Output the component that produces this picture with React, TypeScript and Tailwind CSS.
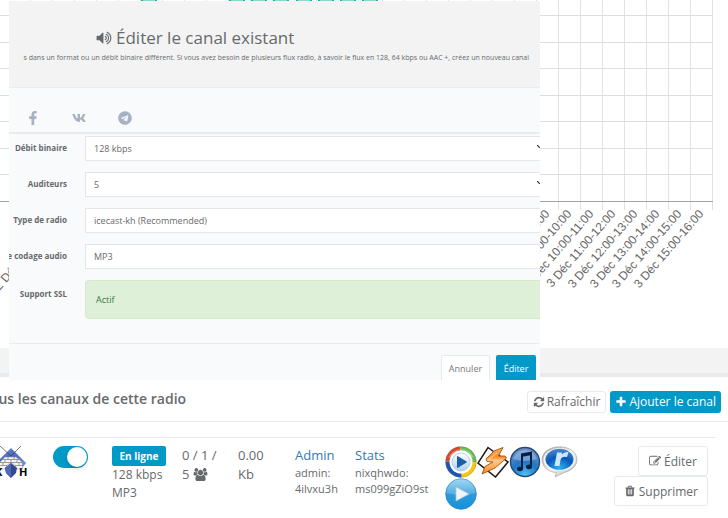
import type { ReactNode } from 'react';
import { FaFacebookF, FaTelegram, FaVk } from 'react-icons/fa';

// ─── Glyphs ───────────────────────────────────────────────────────────────────

const GLYPHS = {
  volume:
    'M832 352v1088q0 26-19 45t-45 19-45-19l-333-333h-262q-26 0-45-19t-19-45v-384q0-26 19-45t45-19h262l333-333q19-19 45-19t45 19 19 45zm384 544q0 76-42.5 141.5t-112.5 93.5q-10 5-25 5-26 0-45-18.5t-19-45.5q0-21 12-35.5t29-25 34-23 29-36 12-56.5-12-56.5-29-36-34-23-29-25-12-35.5q0-27 19-45.5t45-18.5q15 0 25 5 70 27 112.5 93t42.5 142zm256 0q0 153-85 282.5t-225 188.5q-13 5-25 5-27 0-46-19t-19-45q0-39 39-59 56-29 76-44 74-54 115.5-135.5t41.5-173.5-41.5-173.5-115.5-135.5q-20-15-76-44-39-20-39-59 0-26 19-45t45-19q13 0 26 5 140 59 225 188.5t85 282.5zm256 0q0 230-127 422.5t-338 283.5q-13 5-26 5-26 0-45-19t-19-45q0-36 39-59 7-4 22.5-10.5t22.5-10.5q46-25 82-51 123-91 192-227t69-289-69-289-192-227q-36-26-82-51-7-4-22.5-10.5t-22.5-10.5q-39-23-39-59 0-26 19-45t45-19q13 0 26 5 211 91 338 283.5t127 422.5z',
  refresh:
    'M1639 1056q0 5-1 7-64 268-268 434.5t-478 166.5q-146 0-282.5-55t-243.5-157l-129 129q-19 19-45 19t-45-19-19-45v-448q0-26 19-45t45-19h448q26 0 45 19t19 45-19 45l-137 137q71 66 161 102t187 36q134 0 250-65t186-179q11-17 53-117 8-23 30-23h192q13 0 22.5 9.5t9.5 22.5zm25-800v448q0 26-19 45t-45 19h-448q-26 0-45-19t-19-45 19-45l138-138q-148-137-349-137-134 0-250 65t-186 179q-11 17-53 117-8 23-30 23h-199q-13 0-22.5-9.5t-9.5-22.5v-7q65-268 270-434.5t480-166.5q146 0 284 55.5t245 156.5l130-129q19-19 45-19t45 19 19 45z',
  plus:
    'M1600 736v192q0 40-28 68t-68 28h-416v416q0 40-28 68t-68 28h-192q-40 0-68-28t-28-68v-416h-416q-40 0-68-28t-28-68v-192q0-40 28-68t68-28h416v-416q0-40 28-68t68-28h192q40 0 68 28t28 68v416h416q40 0 68 28t28 68z',
  edit:
    'M888 1184l116-116-152-152-116 116v56h96v96h56zm440-720q-16-16-33 1l-350 350q-17 17-1 33t33-1l350-350q17-17 1-33zm80 594v190q0 119-84.5 203.5t-203.5 84.5h-832q-119 0-203.5-84.5t-84.5-203.5v-832q0-119 84.5-203.5t203.5-84.5h832q63 0 117 25 15 7 18 23 3 17-9 29l-49 49q-14 14-32 8-23-6-45-6h-832q-66 0-113 47t-47 113v832q0 66 47 113t113 47h832q66 0 113-47t47-113v-126q0-13 9-22l64-64q15-15 35-7t20 29zm-96-738l288 288-672 672h-288v-288zm444 132l-92 92-288-288 92-92q28-28 68-28t68 28l152 152q28 28 28 68t-28 68z',
  trash:
    'M704 1376v-704q0-14-9-23t-23-9h-64q-14 0-23 9t-9 23v704q0 14 9 23t23 9h64q14 0 23-9t9-23zm256 0v-704q0-14-9-23t-23-9h-64q-14 0-23 9t-9 23v704q0 14 9 23t23 9h64q14 0 23-9t9-23zm256 0v-704q0-14-9-23t-23-9h-64q-14 0-23 9t-9 23v704q0 14 9 23t23 9h64q14 0 23-9t9-23zm-544-992h448l-48-117q-7-9-17-11h-317q-10 2-17 11zm928 32v64q0 14-9 23t-23 9h-96v948q0 83-47 143.5t-113 60.5h-832q-66 0-113-58.5t-47-141.5v-952h-96q-14 0-23-9t-9-23v-64q0-14 9-23t23-9h309l70-167q15-37 54-63t79-26h320q40 0 79 26t54 63l70 167h309q14 0 23 9t9 23z',
  users:
    'M657 896q-162 5-265 128h-134q-82 0-138-40.5t-56-118.5q0-353 124-353 6 0 43.5 21t97.5 42.5 119 21.5q67 0 133-23-5 37-5 66 0 139 81 256zm1071 637q0 120-73 189.5t-194 69.5h-874q-121 0-194-69.5t-73-189.5q0-53 3.5-103.5t14-109 26.5-108.5 43-97.5 62-81 85.5-53.5 111.5-20q10 0 43 21.5t73 48 107 48 135 21.5 135-21.5 107-48 73-48 43-21.5q61 0 111.5 20t85.5 53.5 62 81 43 97.5 26.5 108.5 14 109 3.5 103.5zm-1024-1277q0 106-75 181t-181 75-181-75-75-181 75-181 181-75 181 75 75 181zm704 384q0 159-112.5 271.5t-271.5 112.5-271.5-112.5-112.5-271.5 112.5-271.5 271.5-112.5 271.5 112.5 112.5 271.5zm576 225q0 78-56 118.5t-138 40.5h-134q-103-123-265-128 81-117 81-256 0-29-5-66 66 23 133 23 59 0 119-21.5t97.5-42.5 43.5-21q124 0 124 353zm-128-609q0 106-75 181t-181 75-181-75-75-181 75-181 181-75 181 75 75 181z',
};

function Glyph({ name, className }: { name: keyof typeof GLYPHS; className: string }) {
  return (
    <svg
      viewBox={name === 'users' ? '0 0 2048 1792' : '0 0 1792 1792'}
      className={`inline-block shrink-0 fill-current ${className}`}
      aria-hidden="true"
    >
      <path d={GLYPHS[name]} />
    </svg>
  );
}

// ─── Listeners chart ──────────────────────────────────────────────────────────

const STEP = 22;
const LAST_X = 712;
const GRID_Y = [15, 42, 68, 95, 121, 148, 174];
const COLUMNS = Array.from({ length: 32 }, (_, i) => LAST_X - i * STEP);
const BARS = [141, 229, 251, 273, 296, 318, 340, 362];

function pad(n: number) {
  return String(n).padStart(2, '0');
}

function ListenersChart() {
  return (
    <svg viewBox="0 0 728 348" className="block h-auto w-full" role="img" aria-label="Auditeurs par heure">
      {COLUMNS.map((x) => (
        <rect key={x} x={x} y={0} width={1} height={210} fill="#e2e2e2" />
      ))}
      {GRID_Y.map((y) => (
        <rect key={y} x={0} y={y} width={713} height={1} fill="#dddddd" />
      ))}
      <rect x={0} y={201} width={713} height={1} fill="#a3a3a3" />
      {BARS.map((x) => (
        <g key={x}>
          <rect x={x} y={0} width={16} height={201} fill="#1ab394" />
          <rect x={x + 2} y={0} width={12} height={201} fill="#8cd9c9" />
        </g>
      ))}
      {Array.from({ length: 16 }, (_, i) => (
        <text
          key={i}
          transform={`translate(${698 - i * STEP} 209) rotate(-49)`}
          textAnchor="end"
          y={8}
          className="fill-[#666666] font-['Liberation_Sans',Arial,sans-serif] text-[12px]"
        >
          {`3 Déc ${pad(15 - i)}:00-${pad(16 - i)}:00`}
        </text>
      ))}
      <text
        transform="translate(14 262) rotate(-49)"
        textAnchor="end"
        y={8}
        className="fill-[#666666] font-['Liberation_Sans',Arial,sans-serif] text-[12px]"
      >
        2 Déc
      </text>
    </svg>
  );
}

// ─── Edit dialog ──────────────────────────────────────────────────────────────

interface FieldProps {
  id: string;
  label: string;
  value: string;
  arrow?: boolean;
}

function Field({ id, label, value, arrow }: FieldProps) {
  return (
    <div className="flex">
      <label
        htmlFor={id}
        className="flex w-[58px] shrink-0 justify-end text-[8px] leading-7 font-bold whitespace-nowrap"
      >
        {label}
      </label>
      <div className="relative ml-[18px] h-[25px] grow">
        <select
          id={id}
          defaultValue={value}
          className="h-full w-full appearance-none border border-r-0 border-[#e5e6e7] bg-white px-2 text-[9px]"
        >
          <option>{value}</option>
        </select>
        {arrow && (
          <svg viewBox="0 0 3 3" className="pointer-events-none absolute top-[11px] right-0 h-[3px] w-[3px]">
            <path d="M0 0L3 3" stroke="#333333" strokeWidth="1.2" />
          </svg>
        )}
      </div>
    </div>
  );
}

function EditDialog() {
  return (
    <div
      role="dialog"
      aria-labelledby="dialog-title"
      className="absolute top-px right-[188px] left-[9px] h-[379px] overflow-hidden bg-[#f9fafc]"
    >
      <header className="h-[87px] border-b border-[#e9ebec] bg-[#f3f3f3] pt-[25px]">
        <h4 id="dialog-title" className="ml-[87px] flex items-center text-[17px] leading-6 font-medium whitespace-nowrap">
          <Glyph name="volume" className="mr-1 h-4 w-4" />
          Éditer le canal existant
        </h4>
        <p className="flex justify-end pr-[11px] text-[7px] leading-4 font-medium whitespace-nowrap">
          s dans un format ou un débit binaire différent. Si vous avez besoin de plusieurs flux radio, à savoir le flux
          en 128, 64 kbps ou AAC +, créez un nouveau canal
        </p>
      </header>

      <nav className="flex h-[46px] items-end gap-8 border-b-2 border-[#e9ecef] px-[17px] pb-[7px] text-[#a7b1c2]">
        <a href="#facebook" aria-label="Facebook"><FaFacebookF className="h-[14px] w-[14px]" /></a>
        <a href="#vk" aria-label="VK"><FaVk className="h-[14px] w-[14px]" /></a>
        <a href="#telegram" aria-label="Telegram"><FaTelegram className="h-[14px] w-[14px]" /></a>
      </nav>

      <form onSubmit={(e) => e.preventDefault()}>
        <div className="flex flex-col gap-2">
          <Field id="bitrate" label="Débit binaire" value="128 kbps" arrow />
          <Field id="listeners" label="Auditeurs" value="5" arrow />
          <Field id="server" label="Type de radio" value="icecast-kh (Recommended)" />
          <Field id="codec" label="e codage audio" value="MP3" />
          <div className="mt-0.5 flex">
            <span className="w-[58px] shrink-0 text-right text-[8px] leading-7 font-bold">Support SSL</span>
            <div className="ml-[18px] h-[39px] grow rounded-l-sm border border-r-0 border-[#d6e9c6] bg-[#dff0d8] px-[10px] text-[9px] leading-[37px] text-[#3c763d]">
              Actif
            </div>
          </div>
        </div>
        <footer className="mt-6 flex justify-end gap-[6px] border-t border-[#e9ebec] pt-[11px] pr-1">
          <button
            type="button"
            className="h-7 w-[49px] rounded-xs border border-[#e7eaec] bg-white text-[9px] text-[#777777]"
          >
            Annuler
          </button>
          <button type="submit" className="h-7 w-10 rounded-xs bg-[#0099c8] text-[9px] text-white">
            Éditer
          </button>
        </footer>
      </form>
    </div>
  );
}

// ─── Player badges ────────────────────────────────────────────────────────────

function PlayerDefs() {
  return (
    <svg className="absolute h-0 w-0" aria-hidden="true">
      <defs>
        <linearGradient id="sky" x1="0" y1="0" x2="0" y2="1">
          <stop offset="0" stopColor="#8ed0f0" />
          <stop offset="0.5" stopColor="#2e9bdb" />
          <stop offset="1" stopColor="#1590d8" />
        </linearGradient>
        <linearGradient id="pearl" x1="0" y1="0" x2="0" y2="1">
          <stop offset="0" stopColor="#ffffff" />
          <stop offset="1" stopColor="#a9d2ef" />
        </linearGradient>
        <radialGradient id="deep" cx="0.5" cy="0.95" r="0.9">
          <stop offset="0" stopColor="#4cc4fa" />
          <stop offset="0.5" stopColor="#1f76c8" />
          <stop offset="1" stopColor="#6d90c6" />
        </radialGradient>
        <radialGradient id="real" cx="0.5" cy="0.9" r="0.9">
          <stop offset="0" stopColor="#27b4f4" />
          <stop offset="0.55" stopColor="#0a56b8" />
          <stop offset="1" stopColor="#4d8bd0" />
        </radialGradient>
        <linearGradient id="silver" x1="0" y1="0" x2="1" y2="1">
          <stop offset="0" stopColor="#9a9a9a" />
          <stop offset="0.5" stopColor="#f0f0f0" />
          <stop offset="1" stopColor="#b5b5b5" />
        </linearGradient>
        <linearGradient id="flame" x1="0" y1="0" x2="0" y2="1">
          <stop offset="0" stopColor="#ffb060" />
          <stop offset="0.35" stopColor="#f58a2c" />
          <stop offset="0.5" stopColor="#ffc98a" />
          <stop offset="1" stopColor="#f08a20" />
        </linearGradient>
        <linearGradient id="crystal" x1="0" y1="0" x2="1" y2="1">
          <stop offset="0" stopColor="#7f9ae0" />
          <stop offset="0.5" stopColor="#4a68bf" />
          <stop offset="1" stopColor="#6d86d0" />
        </linearGradient>
      </defs>
    </svg>
  );
}

function MediaPlayerIcon() {
  return (
    <svg viewBox="0 0 32 32" className="h-8 w-8">
      <path d="M16 16L0.500 15.500A15.500 15.500 0 0 1 15.500 0.500z" fill="#d9472b" />
      <path d="M16 16L15.500 0.500A15.500 15.500 0 0 1 31.500 16z" fill="#6cbd55" />
      <path d="M16 16L31.500 16A15.500 15.500 0 0 1 16.500 31.500z" fill="#fcc80f" />
      <path d="M16 16L16.500 31.500A15.500 15.500 0 0 1 0.500 15.500z" fill="#1a56b0" />
      <circle cx="16" cy="16" r="15.200" fill="none" stroke="#60666f" strokeOpacity="0.300" />
      <path d="M3 12A14 14 0 0 1 29 12Q16 5 3 12z" fill="#ffffff" fillOpacity="0.300" />
      <circle cx="16" cy="16" r="11.500" fill="#ffffff" />
      <circle cx="16" cy="16" r="9" fill="url(#pearl)" stroke="#a5c4e0" strokeWidth="0.800" />
      <path d="M12.500 10.500L21.500 16L12.500 21.500z" fill="#1c5fa8" stroke="#1c5fa8" strokeLinejoin="round" />
    </svg>
  );
}

function WinampIcon() {
  return (
    <svg viewBox="0 0 32 32" className="h-8 w-8">
      <path d="M11 1.500L31 16L18.500 31L1 17z" fill="#fafafa" stroke="#1a1a1a" strokeWidth="1.500" />
      <path
        d="M26 1.500L17 5L9 13L10 15.500L16 16L8 20.500L5 28L18 22L29.500 12L28 10L21.500 10z"
        fill="url(#flame)"
        stroke="#a8500f"
        strokeWidth="0.900"
        strokeLinejoin="round"
      />
      <path d="M11 14L20 7" stroke="#ffd9a0" strokeWidth="1" />
    </svg>
  );
}

function MusicIcon() {
  return (
    <svg viewBox="0 0 32 32" className="h-8 w-8">
      <circle cx="16" cy="16" r="14.500" fill="url(#deep)" stroke="#2a4672" strokeWidth="1.400" />
      <path d="M4 13A12.500 12.500 0 0 1 28 13Q16 17 4 13z" fill="#d7e7fa" fillOpacity="0.350" />
      <path d="M22 6.500V20.500M13 9V22.500" fill="none" stroke="#081f3d" strokeWidth="2" />
      <path d="M12 7.500L23 5.500V9L12 11z" fill="#081f3d" />
      <ellipse cx="11" cy="22.800" rx="3" ry="2.400" fill="#081f3d" />
      <ellipse cx="20" cy="20.800" rx="3" ry="2.400" fill="#081f3d" />
    </svg>
  );
}

function RealIcon() {
  return (
    <svg viewBox="0 0 37 32" className="h-8 w-[37px]">
      <path
        d="M18.500 0.800C28.500 0.800 36 6.500 36 13.500C36 19.500 31 24.500 24 26.200L14 31L15.500 26.700C7 26 1 20.500 1 13.500C1 6.500 8.500 0.800 18.500 0.800z"
        fill="url(#silver)"
        stroke="#a0a0a0"
        strokeWidth="0.600"
      />
      <ellipse cx="18.500" cy="13.500" rx="16" ry="11.500" fill="#f0f2f4" />
      <ellipse cx="18.500" cy="13.300" rx="14" ry="10.500" fill="url(#real)" />
      <path d="M13.500 20L16 6.500H21L20.700 8.500Q23 5.500 27.500 6L26 11Q20.500 10 19.500 14L18.500 20z" fill="#cfe8fa" />
    </svg>
  );
}

function PlayIcon() {
  return (
    <svg viewBox="0 0 32 32" className="h-8 w-8">
      <circle cx="16" cy="16" r="15.300" fill="url(#sky)" stroke="#2688c4" strokeWidth="0.800" />
      <path d="M1.500 15A14.500 14.500 0 0 1 30.500 15Q16 19 1.500 15z" fill="#ffffff" fillOpacity="0.180" />
      <path d="M11 9L24 16L11 23z" fill="#f2f5f7" stroke="#a9c6d8" strokeWidth="0.800" strokeLinejoin="round" />
    </svg>
  );
}

function IcecastLogo() {
  return (
    <svg viewBox="0 0 32 32" className="h-8 w-8" role="img" aria-label="Icecast KH">
      <path d="M15 2L30 17H0z" fill="url(#crystal)" />
      <path d="M24 14L30 17L26 22L22 20z" fill="#6d86d0" />
      <path
        d="M9 11H20L26 16L27 23H21L18 18H12L9 23H2L4 16z"
        fill="#f4f4f4"
        stroke="#8a8a8a"
        strokeWidth="0.500"
      />
      <path
        d="M7 13.500H23M4 16.500H26M3 19.500H11M19 19.500H27M12 11V13.500M18 11V13.500M9 13.500V16.500M15 13.500V16.500M21 13.500V16.500M7 16.500V19.500M23 16.500V19.500"
        stroke="#777777"
        strokeWidth="0.700"
      />
      <path d="M15 17L21 22L20 27L15 32L10 27L9 22z" fill="#33488f" />
      <path d="M15 17V32L10 27L9 22z" fill="#5069b5" />
      <path d="M4 0L15 10M25 0L15 10" stroke="#444444" strokeWidth="0.700" />
      <text x="23" y="30" className="fill-black font-['Open_Sans',sans-serif] text-[11px] font-bold">H</text>
      <text x="-1" y="30" className="fill-black font-['Open_Sans',sans-serif] text-[11px] font-bold">K</text>
    </svg>
  );
}

const PLAYERS: { name: string; icon: ReactNode }[] = [
  { name: 'Windows Media Player', icon: <MediaPlayerIcon /> },
  { name: 'Winamp', icon: <WinampIcon /> },
  { name: 'iTunes', icon: <MusicIcon /> },
  { name: 'RealPlayer', icon: <RealIcon /> },
  { name: 'Lecteur web', icon: <PlayIcon /> },
];

// ─── Channels ─────────────────────────────────────────────────────────────────

function ChannelsTable() {
  return (
    <table className="w-[calc(100%-12px)] table-fixed border-t border-[#e7eaec] text-[13px] leading-[19px]">
      <colgroup>
        <col className="w-[53px]" />
        <col className="w-[59px]" />
        <col className="w-[70px]" />
        <col className="w-[56px]" />
        <col className="w-[57px]" />
        <col className="w-[60px]" />
        <col className="w-[90px]" />
        <col className="w-[140px]" />
        <col />
      </colgroup>
      <tbody>
        <tr className="align-top">
          <td className="pt-2"><div className="-ml-1"><IcecastLogo /></div></td>
          <td className="pt-2">
            <label className="flex h-[22px] w-[35px] justify-end rounded-full bg-[#0099c8] p-px">
              <input type="checkbox" defaultChecked aria-label="Canal actif" className="peer sr-only" />
              <span className="h-5 w-5 rounded-full bg-white shadow-md" />
            </label>
          </td>
          <td className="pt-2 text-[12px] leading-[18px]">
            <span className="block w-[54px] rounded-xs bg-[#0099c8] text-center text-[10px] leading-5 font-bold text-white">
              En ligne
            </span>
            128 kbps
            <br />
            MP3
          </td>
          <td className="pt-2">
            0 / 1 /
            <br />
            5 <Glyph name="users" className="h-[13px] w-[15px] align-[-2px]" />
          </td>
          <td className="pt-2">0.00<br />Kb</td>
          <td className="pt-2 text-[11px] leading-4">
            <a href="#admin" className="block text-[13px] leading-[19px] text-[#337ab7]">Admin</a>
            admin:
            <br />
            4ilvxu3h
          </td>
          <td className="pt-2 text-[11px] leading-4">
            <a href="#stats" className="block text-[13px] leading-[19px] text-[#337ab7]">Stats</a>
            nixqhwdo:
            <br />
            ms099gZiO9st
          </td>
          <td className="pt-2">
            <div className="flex flex-wrap">
              {PLAYERS.map((p) => (
                <a key={p.name} href="#listen" aria-label={p.name}>{p.icon}</a>
              ))}
            </div>
          </td>
          <td className="pt-2">
            <div className="flex flex-col items-end pr-2">
              <button
                type="button"
                className="flex h-[30px] items-center gap-[3px] rounded-[3px] border border-[#e7eaec] bg-white px-[10px] text-[12px]"
              >
                <Glyph name="edit" className="h-3 w-3" />
                Éditer
              </button>
              <button
                type="button"
                className="flex h-[30px] items-center gap-[3px] rounded-[3px] border border-[#e7eaec] bg-white px-[9px] text-[12px]"
              >
                <Glyph name="trash" className="h-3 w-3" />
                Supprimer
              </button>
            </div>
          </td>
        </tr>
      </tbody>
    </table>
  );
}

export default function App() {
  return (
    <main className="relative min-h-screen overflow-hidden bg-white font-['Open_Sans',sans-serif] text-[#676a6c]">
      <PlayerDefs />
      <ListenersChart />
      <div className="h-[29px] border-b-4 border-[#e7ebee] bg-[#f3f3f3]" />

      <section>
        <div className="flex h-[45px] items-start justify-between border-b border-[#e7eaec] pr-[7px]">
          <h5 className="-ml-[18px] pt-3 text-[14px] leading-5 font-semibold whitespace-nowrap">
            Tous les canaux de cette radio
          </h5>
          <div className="flex gap-1 pt-[14px] text-[12px]">
            <button
              type="button"
              className="flex h-[22px] items-center gap-[2px] rounded-[3px] border border-[#e7eaec] bg-white px-[5px]"
            >
              <Glyph name="refresh" className="h-3 w-3" />
              Rafraîchir
            </button>
            <button type="button" className="flex h-[22px] items-center gap-[2px] rounded-[3px] bg-[#0099c8] px-[5px] text-white">
              <Glyph name="plus" className="h-3 w-3" />
              Ajouter le canal
            </button>
          </div>
        </div>
        <div className="pt-[15px]">
          <ChannelsTable />
        </div>
      </section>

      <EditDialog />
    </main>
  );
}
